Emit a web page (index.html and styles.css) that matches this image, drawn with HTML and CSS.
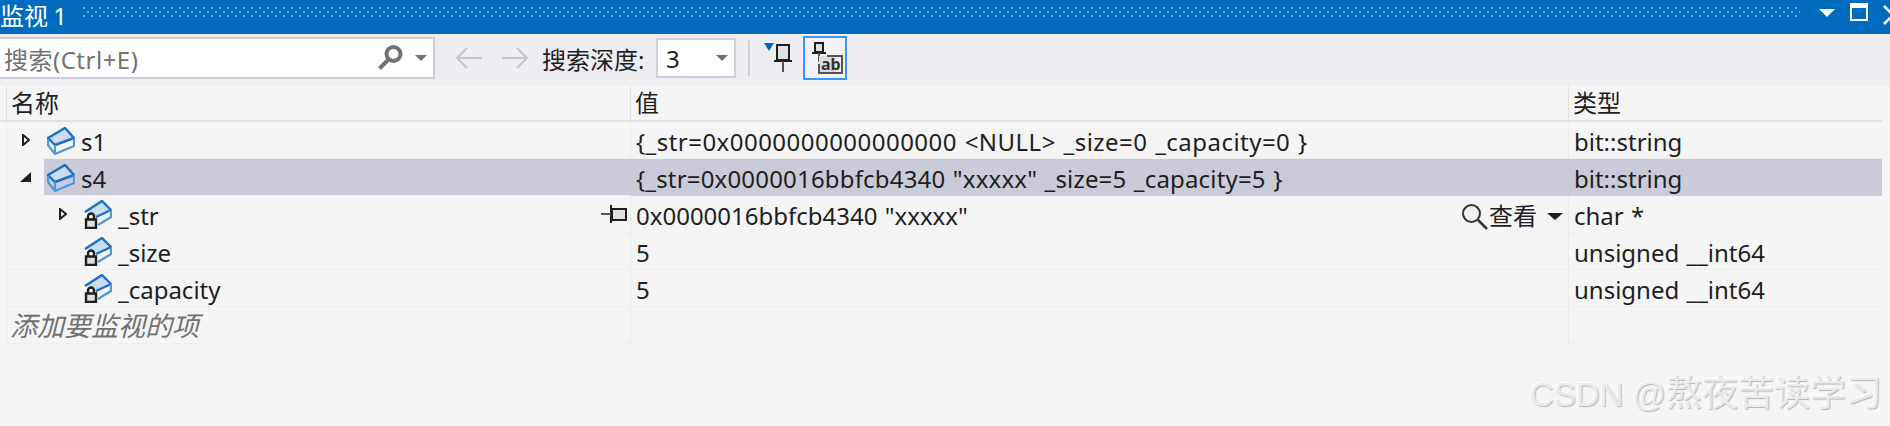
FILE: index.html
```html
<!DOCTYPE html>
<html lang="zh">
<head>
<meta charset="utf-8">
<title>监视 1</title>
<link rel="stylesheet" href="styles.css">
</head>
<body>
<svg class="defs" width="0" height="0">
  <defs>
    <g id="cube">
      <path class="top" d="M18 1 27 11 8 18 1 11Z"/>
      <path class="edge" d="M1 11 18 1 27 11 8 18Z"/>
      <path class="low" d="M1 12V18L8 27 27 19V11M8 18V27"/>
    </g>
    <g id="cubelock">
      <path class="top" d="M18 1 27 10 11 17 5 12 1 12Z"/>
      <path class="edge" d="M1 12 18 1 27 10 12 17"/>
      <path class="low" d="M27 10V17L14 25"/>
      <path class="lockbody" d="M2 19.500H12V28H2Z"/>
      <path class="shackle" d="M4 19V16.500A3 3 0 0 1 10 16.500V19"/>
    </g>
    <path id="arrow-open" class="exp-open" d="M1 1 7 6 1 11Z"/>
    <path id="arrow-down" d="M11 0V10H0Z"/>
  </defs>
</svg>

<header class="titlebar">
  <span class="title">监视 1</span>
  <svg class="grip" height="12">
    <defs>
      <pattern id="dots" width="8" height="8" patternUnits="userSpaceOnUse">
        <rect x="0" y="0" width="2" height="2"/>
        <rect x="4" y="4" width="2" height="2"/>
      </pattern>
    </defs>
    <rect width="100%" height="10" fill="url(#dots)"/>
  </svg>
  <div class="winbtns">
    <svg class="wb-drop" width="16" height="8" viewBox="0 0 16 8"><path d="M0 0H16L8 8Z"/></svg>
    <span class="wb-max"></span>
    <svg class="wb-close" width="12" height="20" viewBox="0 0 12 20"><path d="M1 1 10 10 1 19"/></svg>
  </div>
</header>

<div class="toolbar">
  <div class="search">
    <span class="placeholder">搜索(Ctrl+E)</span>
    <svg class="mag" width="26" height="26" viewBox="0 0 26 26"><circle cx="16.500" cy="9" r="7"/><path d="M11 15 2.500 23.500"/></svg>
    <svg class="caret" width="12" height="6" viewBox="0 0 12 6"><path d="M0 0H12L6 6Z"/></svg>
  </div>
  <svg class="nav nav-back" width="26" height="22" viewBox="0 0 26 22"><path d="M11 1 1 11 11 21M1 11H26"/></svg>
  <svg class="nav nav-fwd" width="26" height="22" viewBox="0 0 26 22"><path d="M15 1 25 11 15 21M25 11H0"/></svg>
  <span class="depth-label">搜索深度:</span>
  <div class="combo">
    <span>3</span>
    <svg class="caret" width="12" height="6" viewBox="0 0 12 6"><path d="M0 0H12L6 6Z"/></svg>
  </div>
  <span class="sep"></span>
  <svg class="filterpin" width="30" height="32" viewBox="0 0 30 32">
    <path class="blue" d="M0 2H10L5 10Z"/>
    <path class="pinbox" d="M13 4H25V19H13Z"/>
    <path class="pinline" d="M10 20H28"/>
    <path class="pinstem" d="M19 20V31"/>
  </svg>
  <button class="toggle" type="button" aria-label="ab">
    <svg width="36" height="36" viewBox="0 0 36 36">
      <path class="pinbox" d="M8 3H16V12H8Z"/>
      <path class="pinline" d="M5 13H19"/>
      <path class="pinstem" d="M12 13V22"/>
      <path class="abfill" d="M12 16H29V34H12Z"/>
      <path class="abbox" d="M12 24V33H35V16H20"/>
      <text class="abtext" x="14" y="30">ab</text>
    </svg>
  </button>
</div>

<main class="watch">
  <div class="row head">
    <div class="gutter"></div>
    <div class="cell name-h">名称</div>
    <div class="cell">值</div>
    <div class="cell">类型</div>
  </div>

  <div class="row">
    <div class="gutter"></div>
    <div class="cell name">
      <span class="exp"><svg width="8" height="12" viewBox="0 0 8 12"><use href="#arrow-open"/></svg></span>
      <span class="label"><svg class="ico" width="28" height="28" viewBox="0 0 28 28"><use href="#cube"/></svg>s1</span>
    </div>
    <div class="cell val track-wide">{_str=0x0000000000000000 &lt;NULL&gt; _size=0 _capacity=0 }</div>
    <div class="cell val">bit::string</div>
  </div>

  <div class="row selected">
    <div class="gutter"></div>
    <div class="cell name">
      <span class="exp"><svg width="11" height="10" viewBox="0 0 11 10"><use href="#arrow-down"/></svg></span>
      <span class="label"><svg class="ico" width="28" height="28" viewBox="0 0 28 28"><use href="#cube"/></svg>s4</span>
    </div>
    <div class="cell val track-mid">{_str=0x0000016bbfcb4340 "xxxxx" _size=5 _capacity=5 }</div>
    <div class="cell val">bit::string</div>
  </div>

  <div class="row">
    <div class="gutter"></div>
    <div class="cell name depth1">
      <span class="exp"><svg width="8" height="12" viewBox="0 0 8 12"><use href="#arrow-open"/></svg></span>
      <span class="label"><svg class="ico" width="28" height="29" viewBox="0 0 28 29"><use href="#cubelock"/></svg>_str</span>
      <svg class="rowpin" width="26" height="18" viewBox="0 0 26 18"><path class="pinbox" d="M11 4H25V15H11Z"/><path class="pinline" d="M10 0V18"/><path class="pinstem" d="M0 9H10"/></svg>
    </div>
    <div class="cell val spread">
      <span>0x0000016bbfcb4340 "xxxxx"</span>
      <span class="viewer">
        <svg width="27" height="27" viewBox="0 0 27 27"><circle class="vm" cx="10.500" cy="10.500" r="8.500"/><path class="vh" d="M17 17 26 26"/></svg>
        <span class="viewer-text">查看</span>
        <svg class="viewer-caret" width="16" height="7" viewBox="0 0 16 7"><path d="M0 0H16L8 7Z"/></svg>
      </span>
    </div>
    <div class="cell val">char *</div>
  </div>

  <div class="row">
    <div class="gutter"></div>
    <div class="cell name depth1">
      <span class="exp"></span>
      <span class="label"><svg class="ico" width="28" height="29" viewBox="0 0 28 29"><use href="#cubelock"/></svg>_size</span>
    </div>
    <div class="cell val">5</div>
    <div class="cell val">unsigned __int64</div>
  </div>

  <div class="row">
    <div class="gutter"></div>
    <div class="cell name depth1">
      <span class="exp"></span>
      <span class="label"><svg class="ico" width="28" height="29" viewBox="0 0 28 29"><use href="#cubelock"/></svg>_capacity</span>
    </div>
    <div class="cell val">5</div>
    <div class="cell val">unsigned __int64</div>
  </div>

  <div class="row">
    <div class="gutter"></div>
    <div class="cell add">添加要监视的项</div>
    <div class="cell"></div>
    <div class="cell"></div>
  </div>
</main>

<div class="watermark"><span class="wm-latin">CSDN @</span>熬夜苦读学习</div>
</body>
</html>
```

FILE: styles.css
```css
html, body {
  margin: 0;
  padding: 0;
  height: 100%;
  overflow: hidden;
  background: #f5f5f5;
  color: #1e1e1e;
  font-family: "Noto Sans", "Noto Sans CJK SC", sans-serif;
}

.defs { position: absolute; }

.titlebar {
  display: flex;
  height: 34px;
  background: #016cbd;
  color: #fff;
  overflow: hidden;
}
.title {
  width: 83px;
  flex: none;
  font-size: 24px;
  line-height: 31px;
  word-spacing: -1px;
  white-space: nowrap;
}
.grip {
  flex: none;
  width: 1717px;
  margin-top: 7px;
}
.grip rect { fill: none; }
.grip pattern rect { fill: #66a7dc; }
.grip > rect { fill: url(#dots); }
.winbtns {
  flex: 1;
  display: flex;
  align-items: flex-start;
  padding-left: 19px;
}
.wb-drop { fill: #fff; margin-top: 9px; flex: none; }
.wb-max {
  flex: none;
  box-sizing: border-box;
  width: 18px;
  height: 18px;
  margin: 3px 0 0 15px;
  border: 2px solid #fff;
  border-top-width: 5px;
}
.wb-close { flex: none; margin: 5px 0 0 15px; fill: none; stroke: #fff; stroke-width: 2.5; }

.toolbar {
  display: flex;
  align-items: center;
  height: 52px;
  background: #eeeef2;
}
.search {
  flex: none;
  box-sizing: border-box;
  display: flex;
  align-items: center;
  width: 438px;
  height: 42px;
  margin: -4px 0 0 -3px;
  padding-left: 5px;
  background: #fff;
  border: 2px solid #ccceDB;
}
.placeholder {
  flex: 1;
  font-size: 24px;
  letter-spacing: .5px;
  color: #717171;
  white-space: nowrap;
}
.mag { flex: none; fill: none; stroke: #717171; stroke-width: 4; margin-right: 12px; }
.caret { flex: none; fill: #717171; }
.search .caret { margin-right: 6px; }

.nav { flex: none; fill: none; stroke: #c6c6c6; stroke-width: 2.2; margin-top: -4px; }
.nav-back { margin-left: 21px; }
.nav-fwd { margin-left: 20px; }
.depth-label { flex: none; margin: -4px 0 0 14px; font-size: 24px; white-space: nowrap; width: 100px; }
.combo {
  flex: none;
  box-sizing: border-box;
  display: flex;
  align-items: center;
  justify-content: space-between;
  width: 80px;
  height: 40px;
  margin: -4px 0 0 14px;
  padding: 0 6px 0 8px;
  background: #fff;
  border: 2px solid #ccceDB;
  font-size: 24px;
}
.sep {
  flex: none;
  width: 2px;
  height: 36px;
  margin: -4px 0 0 12px;
  background: #ccceDB;
}
.filterpin { flex: none; margin: -6px 0 0 14px; }
.blue { fill: #0e5fbe; }
.pinbox { fill: #e0e0e0; stroke: #1e1e1e; stroke-width: 2; }
.pinline { fill: none; stroke: #1e1e1e; stroke-width: 2; }
.pinstem { fill: none; stroke: #555; stroke-width: 2; }
.toggle {
  flex: none;
  box-sizing: border-box;
  display: flex;
  align-items: center;
  justify-content: center;
  width: 44px;
  height: 44px;
  margin: -4px 0 0 9px;
  padding: 0;
  background: #f3f3f6;
  border: 2px solid #3399ff;
}
.abfill { fill: #dcdcdc; }
.abbox { fill: none; stroke: #555; stroke-width: 2; }
.abtext { font-size: 16px; font-weight: 700; fill: #333; font-family: "Noto Sans", sans-serif; }

.watch { width: 1882px; }
.row {
  display: grid;
  grid-template-columns: 7px 624px 938px 313px;
  grid-template-rows: 100%;
  height: 37px;
  box-sizing: border-box;
  font-size: 24px;
  line-height: 30px;
  word-spacing: 1px;
}
.row.head { height: 36px; border-bottom: 2px solid #e2e2e2; }
.gutter { border-right: 1px solid #ebebeb; }
.cell {
  display: flex;
  align-items: center;
  min-width: 0;
  box-sizing: border-box;
  padding: 2px 0 0 5px;
  border-right: 1px solid #ebebeb;
  border-bottom: 1px solid #efefef;
  white-space: nowrap;
}
.cell.val { padding-top: 4px; }
.head .cell { border-bottom: 0; border-right-color: #e2e2e2; padding: 0 0 0 4px; }
.head .gutter { border-right-color: #e2e2e2; }
.cell:last-child { border-right: 0; }

.cell.name { padding: 0; }
.cell.name.depth1 { padding-left: 37px; }
.exp {
  flex: none;
  display: flex;
  align-items: center;
  justify-content: center;
  width: 37px;
  height: 100%;
}
.exp svg { fill: none; stroke: #1e1e1e; stroke-width: 2; }
.selected .exp svg { fill: #1e1e1e; stroke: none; }
.label {
  flex: 1;
  display: flex;
  align-items: center;
  gap: 6px;
  box-sizing: border-box;
  height: 100%;
  padding: 4px 0 0 3px;
}
.selected .label,
.selected .val { background: #cacbd9; border-color: transparent; }
.selected .label { margin-right: -1px; }

.track-wide { letter-spacing: .47px; }
.track-mid { letter-spacing: .18px; }

.ico { flex: none; margin-top: -3px; }
.top { fill: #c9dcf0; stroke: none; }
.selected .top { fill: #a7bbdb; }
.edge { fill: none; stroke: #1b6ec2; stroke-width: 2.4; stroke-linejoin: round; }
.low { fill: none; stroke: #4f97dc; stroke-width: 2.2; stroke-linejoin: round; }
.selected .edge { stroke: #155fae; }
.lockbody { fill: #e0e0e0; stroke: #1e1e1e; stroke-width: 2.4; }
.shackle { fill: none; stroke: #1e1e1e; stroke-width: 2.4; }

.rowpin { flex: none; margin-right: 3px; }

.spread { justify-content: space-between; padding-right: 5px; }
.viewer { display: flex; align-items: center; }
.vm { fill: #efefef; stroke: #333; stroke-width: 2; }
.vh { fill: none; stroke: #333; stroke-width: 2.5; }
.viewer-text { font-size: 24px; margin-left: 1px; }
.viewer-caret { fill: #1e1e1e; margin-left: 10px; }

.add { font-size: 27px; font-style: italic; color: #717171; padding-left: 3px; }

.watermark {
  position: absolute;
  right: 8px;
  top: 370px;
  font-family: "Liberation Sans", "Noto Sans CJK SC", sans-serif;
  font-size: 36px;
  line-height: 48px;
  color: #ebebeb;
  text-shadow: 1px 1px 1px #b5b5b5, -1px -1px 0 #fff;
  white-space: nowrap;
}
.wm-latin { font-size: 33px; }
```
